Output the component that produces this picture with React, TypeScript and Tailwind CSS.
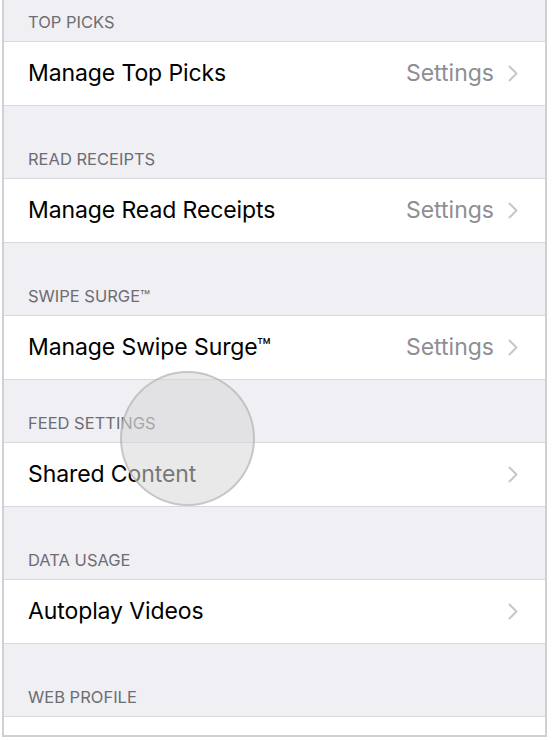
import React from 'react';

interface Section {
  header: string;
  label: string;
  detail?: string;
  gap: string;
}

const sections: Section[] = [
  { header: 'TOP PICKS', label: 'Manage Top Picks', detail: 'Settings', gap: 'h-[42px]' },
  { header: 'READ RECEIPTS', label: 'Manage Read Receipts', detail: 'Settings', gap: 'h-[73px]' },
  { header: 'SWIPE SURGE™', label: 'Manage Swipe Surge™', detail: 'Settings', gap: 'h-[73px]' },
  { header: 'FEED SETTINGS', label: 'Shared Content', gap: 'h-[63px]' },
  { header: 'DATA USAGE', label: 'Autoplay Videos', gap: 'h-[73px]' },
  { header: 'WEB PROFILE', label: '', gap: 'h-[73px]' },
];

const Chevron = () => (
  <svg width="10" height="17" viewBox="0 0 10 17" fill="none" className="shrink-0">
    <path d="M1.5 1.5 L8.5 8.5 L1.5 15.5" stroke="#c7c7cc" strokeWidth="2" strokeLinecap="round" strokeLinejoin="round" />
  </svg>
);

const Row: React.FC<{ label: string; detail?: string }> = ({ label, detail }) => (
  <div className="h-[64px] bg-white border-b border-[#d9d9dd] flex items-center pl-[24px] pr-[27px]">
    <span className="flex-1 text-[23px] text-black tracking-[-0.1px]">{label}</span>
    {detail && <span className="text-[23px] text-[#8e8e93] mr-[14px]">{detail}</span>}
    <Chevron />
  </div>
);

export default function App() {
  return (
    <div className="w-[552px] h-[740px] bg-white overflow-hidden" style={{ fontFamily: 'Inter, "Noto Sans", sans-serif' }}>
      <div className="relative ml-[2px] w-[545px] h-[737px] border-x-2 border-b-2 border-[#d0d0d4] bg-[#efeff4] overflow-hidden">
        {sections.map((s, i) => (
          <div key={i}>
            <div className={`${s.gap} flex items-end pl-[24px] pb-[9px] border-b border-[#d9d9dd]`}>
              <span className="text-[16.5px] leading-[20px] text-[#6d6d72]">{s.header}</span>
            </div>
            {s.label ? <Row label={s.label} detail={s.detail} /> : <div className="h-[64px] bg-white" />}
          </div>
        ))}
        <div className="absolute left-[116px] top-[371px] w-[135px] h-[135px] rounded-full bg-[rgba(215,215,215,0.55)] border-2 border-[rgba(170,170,170,0.55)]" />
      </div>
    </div>
  );
}
